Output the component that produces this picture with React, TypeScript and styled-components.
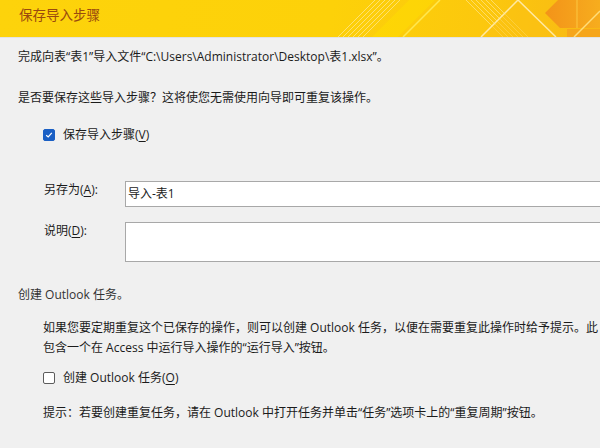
import * as React from "react";
import styled, { createGlobalStyle } from "styled-components";

const GlobalStyle = createGlobalStyle`
  html, body {
    margin: 0;
    padding: 0;
    background: #f0f0f0;
    overflow: hidden;
  }
  body {
    font-family: "Open Sans", "Noto Sans CJK SC", sans-serif;
    font-size: 12px;
    color: #1b1b1b;
  }
`;

const Dialog = styled.main`
  width: 600px;
  height: 448px;
  overflow: hidden;
  background: #f0f0f0;
`;

const Header = styled.header`
  position: relative;
  height: 37px;
  overflow: hidden;
  border-bottom: 1px solid #e3e3e3;
  background: linear-gradient(100deg, #fdd30b 0%, #fdd109 55%, #fcc80d 80%, #f8b815 100%);
`;

const Title = styled.h1`
  position: relative;
  z-index: 1;
  margin: 0;
  padding: 3px 0 0 19px;
  font-family: "Noto Sans CJK SC", sans-serif;
  font-size: 13.5px;
  line-height: 22px;
  font-weight: 400;
  color: #9a4a0e;
`;

const Decor = styled.svg`
  position: absolute;
  top: 0;
  right: 0;
`;

const Content = styled.section`
  width: 820px;
  padding: 0 18px;
`;

const Line = styled.p<{ $top: number; $indent?: number; $muted?: boolean }>`
  margin: ${(p) => p.$top}px 0 0 ${(p) => p.$indent ?? 0}px;
  line-height: 20px;
  white-space: nowrap;
  color: ${(p) => (p.$muted ? "#333333" : "#1b1b1b")};
`;

const CheckRow = styled.label<{ $top: number }>`
  display: flex;
  align-items: center;
  gap: 8px;
  margin: ${(p) => p.$top}px 0 0 25px;
  line-height: 20px;
`;

const Box = styled.span<{ $checked: boolean }>`
  display: inline-flex;
  align-items: center;
  justify-content: center;
  box-sizing: border-box;
  width: 12px;
  height: 12px;
  border-radius: 2px;
  background: ${(p) => (p.$checked ? "#1a5fc4" : "#ffffff")};
  border: 1px solid ${(p) => (p.$checked ? "#1a5fc4" : "#5c5c5c")};
`;

const Key = styled.u`
  text-decoration-thickness: 1px;
  text-underline-offset: 2px;
`;

const FieldRow = styled.div<{ $top: number }>`
  display: grid;
  grid-template-columns: 81px 1fr;
  margin: ${(p) => p.$top}px 0 0 26px;
`;

const FieldLabel = styled.span`
  line-height: 18px;
`;

const Input = styled.div<{ $height: number }>`
  box-sizing: border-box;
  height: ${(p) => p.$height}px;
  background: #ffffff;
  border: 1px solid #a8a8a8;
  padding: 0 2px;
  line-height: 23px;
`;

const Mark = () => (
  <svg width="8" height="8" viewBox="0 0 8 8">
    <path d="M1.2 4.2 L3.2 6 L6.8 1.8" fill="none" stroke="#ffffff" strokeWidth="1.2" />
  </svg>
);

const HeaderArt = () => (
  <Decor width="280" height="37" viewBox="320 0 280 37">
    <defs>
      <linearGradient id="org" x1="0" y1="0" x2="1" y2="0">
        <stop offset="0" stopColor="#f39319" />
        <stop offset="1" stopColor="#f7ad1e" />
      </linearGradient>
    </defs>
    <polygon points="372,37 398,37 435,0 409,0" fill="#ffe000" opacity="0.45" />
    {[0, 1, 2, 3, 4, 5].map((i) => (
      <line key={"a" + i} x1={338 + i * 5} y1={37} x2={375 + i * 5} y2={0} stroke="#ffe58a" strokeWidth="1" opacity="0.8" />
    ))}
    <line x1={403} y1={37} x2={440} y2={0} stroke="#ffe84f" strokeWidth="1.5" />
    {[0, 1, 2, 3, 4, 5].map((i) => (
      <line key={"b" + i} x1={466 + i * 5} y1={0} x2={503 + i * 5} y2={37} stroke="#ffe58a" strokeWidth="1" opacity="0.7" />
    ))}
    <polygon points="518,0 556,37 481,37" fill="#fbc114" opacity="0.5" />
    <polyline points="481,37 518,0 556,37" fill="none" stroke="#ffe9a3" strokeWidth="1.5" />
    <polygon points="545,13 558,0 600,0 600,28 560,28" fill="url(#org)" />
    <line x1={577} y1={0} x2={577} y2={28} stroke="#fbc13c" strokeWidth="1.2" />
    <rect x={567} y={29} width={33} height={8} fill="#f6a61b" />
    <line x1={574} y1={37} x2={600} y2={11} stroke="#ffdd7a" strokeWidth="1.5" />
  </Decor>
);

const App = () => {
  return (
    <Dialog>
      <GlobalStyle />
      <Header>
        <HeaderArt />
        <Title>保存导入步骤</Title>
      </Header>
      <Content>
        <Line $top={9}>完成向表“表1”导入文件“C:\Users\Administrator\Desktop\表1.xlsx”。</Line>
        <Line $top={21}>是否要保存这些导入步骤？这将使您无需使用向导即可重复该操作。</Line>
        <CheckRow $top={17}>
          <Box $checked>
            <Mark />
          </Box>
          <span>
            保存导入步骤(<Key>V</Key>)
          </span>
        </CheckRow>
        <FieldRow $top={36}>
          <FieldLabel>
            另存为(<Key>A</Key>):
          </FieldLabel>
          <Input $height={26}>导入-表1</Input>
        </FieldRow>
        <FieldRow $top={15}>
          <FieldLabel>
            说明(<Key>D</Key>):
          </FieldLabel>
          <Input $height={40} />
        </FieldRow>
        <Line $top={23} $muted>
          创建 Outlook 任务。
        </Line>
        <Line $top={13} $indent={25}>
          如果您要定期重复这个已保存的操作，则可以创建 Outlook 任务，以便在需要重复此操作时给予提示。此 Outlook 任务将
          <br />
          包含一个在 Access 中运行导入操作的“运行导入”按钮。
        </Line>
        <CheckRow $top={10}>
          <Box $checked={false} />
          <span>
            创建 Outlook 任务(<Key>O</Key>)
          </span>
        </CheckRow>
        <Line $top={15} $indent={25}>
          提示：若要创建重复任务，请在 Outlook 中打开任务并单击“任务”选项卡上的“重复周期”按钮。
        </Line>
      </Content>
    </Dialog>
  );
};

export default App;
